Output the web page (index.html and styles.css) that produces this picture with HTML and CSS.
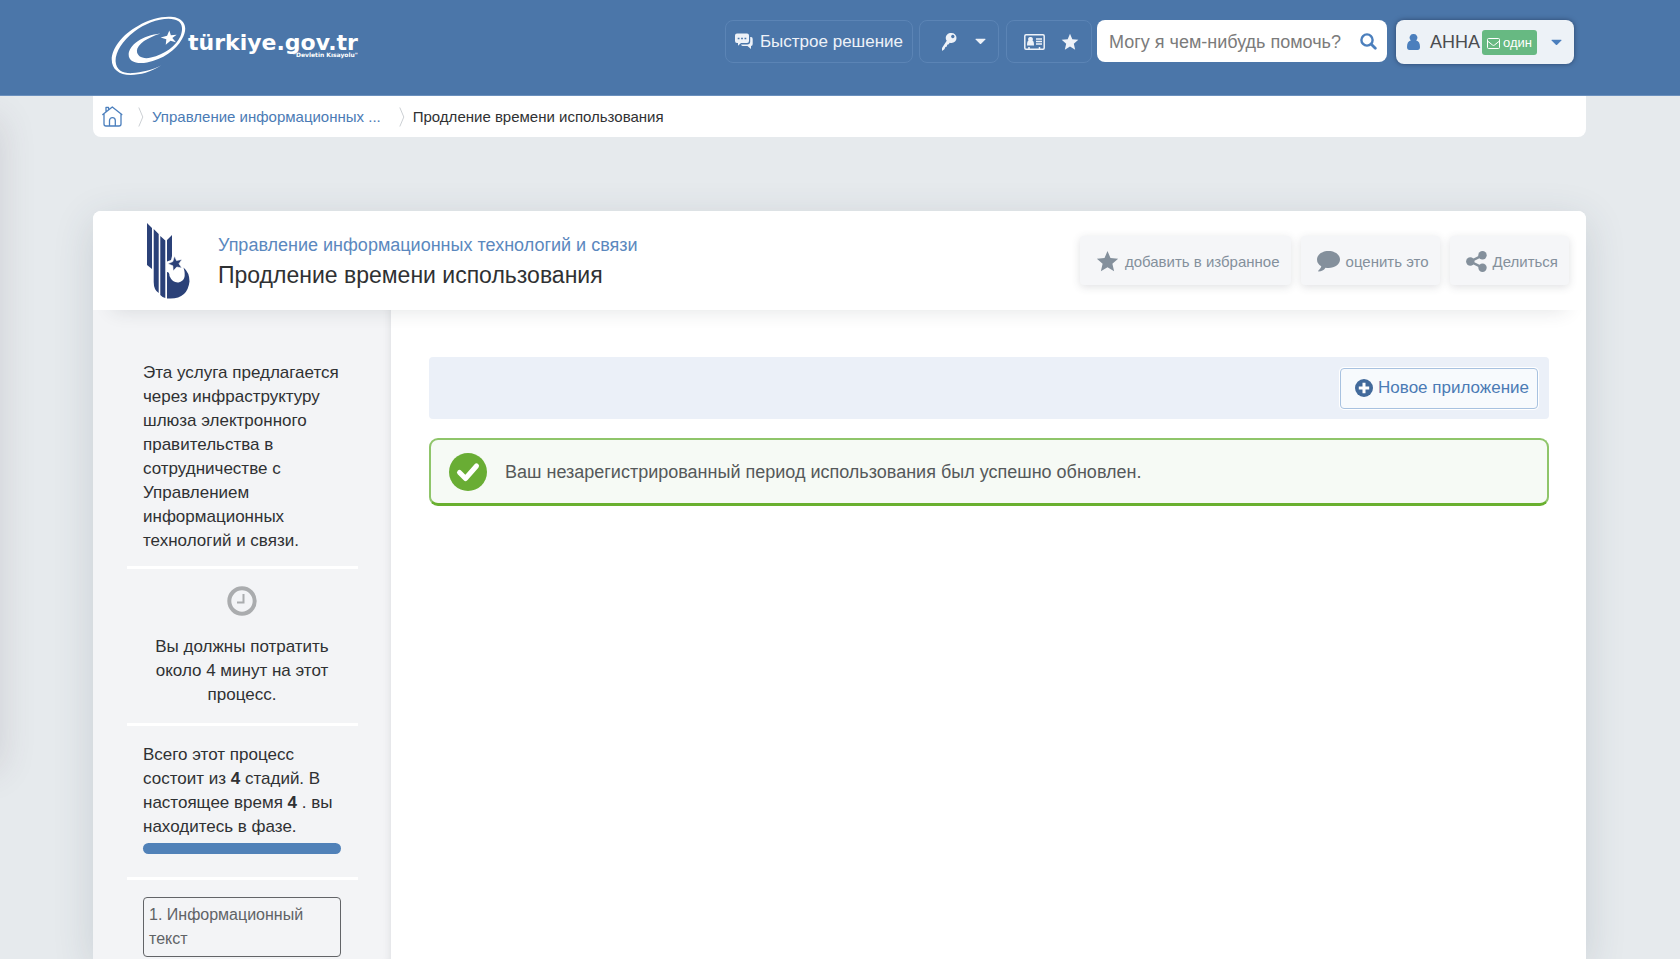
FILE: index.html
```
<!DOCTYPE html>
<html lang="ru">
<head>
<meta charset="utf-8">
<title>Продление времени использования</title>
<link rel="stylesheet" href="styles.css">
</head>
<body>
<svg class="defs" aria-hidden="true">
  <symbol id="star" viewBox="0 0 24 24"><path d="M12 1l3.1 7.4 8 .7-6 5.3 1.8 7.8-6.9-4.1-6.9 4.1 1.8-7.8-6-5.3 8-.7z"/></symbol>
  <symbol id="caret" viewBox="0 0 12 7"><path d="M1 .5h10q.8 0 .3.7L6.7 6q-.7.7-1.4 0L.7 1.200Q.200.5 1 .5z"/></symbol>
</svg>
<header class="topbar">
  <a class="logo" href="#" aria-label="türkiye.gov.tr">
    <svg width="78" height="60" viewBox="0 0 78 62">
      <path fill="#fff" fill-rule="evenodd" d="M52 51C41 58 30 61 20 61C8 61 .5 55 .5 45C.5 34 11 19 28 10C42 2 58-1 68 2C77 5 79 14 73 24C67 35 53 45 37 48C26 50 18 47 18 40C18 30 32 20 51 18C38 22 26.500 29 26.500 36C26.500 42 33 45 41 43C55 40 67 31 71.500 21C75 12 73 5 65 3.500C53 1 36 7 24 16C11 26 4 38 4.500 47C5 56 12 59.500 22 59C31 58.500 42 56 52 51z"/>
      <path fill="#fff" d="M60 15l1.600 4.800 6-.3-4.500 3.300 3.700 4.400-5.600-1.500-4.900 4 .6-5.600-5.900-2 6.700-1.600z"/>
    </svg>
    <span class="wordmark"><span class="brand">türkiye.gov.tr</span><span class="motto">"Devletin Kısayolu"</span></span>
  </a>
  <nav class="tools">
    <button class="ghost quick" type="button">
      <svg width="18" height="17" viewBox="0 0 18 17" fill="currentColor"><path fill-rule="evenodd" d="M2 .5h10q2 0 2 2V8q0 2-2 2H6l-3 2.700V10H2Q0 10 0 8V2.500Q0 .5 2 .5zM2.700 4.800v1.400h1.800V4.800zm3.400 0v1.400h1.800V4.800zm3.400 0v1.400h1.800V4.800z"/><path d="M15.200 4H16q1.700 0 1.700 2v5q0 2-1.700 2v3l-3.500-3H8q-1.500 0-2-1.600h6.200q3 0 3-3z"/></svg>
      <span>Быстрое решение</span>
    </button>
    <button class="ghost key" type="button" aria-label="Вход">
      <svg width="15" height="18" viewBox="0 0 15 18" fill="currentColor"><path fill-rule="evenodd" d="M9.500 0a5 5 0 0 1 0 10q-1 0-1.800-.3l-1 1.600-1.500.5-.3 1.700-1.500.5-1 2.300-2 1.500-.4-.3V15l4.700-7.200A5 5 0 0 1 9.500 0zM10.800 1.800a1.700 1.700 0 1 0 .01 0z"/></svg>
      <svg class="caret" width="11" height="7"><use href="#caret"/></svg>
    </button>
    <div class="ghost pair">
      <button type="button" aria-label="Профиль"><svg width="21" height="16" viewBox="0 0 21 16"><path fill="none" stroke="currentColor" stroke-width="1.500" d="M2 .8h17q1.200 0 1.200 1.200v12q0 1.200-1.200 1.200H2Q.8 15.200.8 14V2Q.8.8 2 .8zM12 5h6M12 7.500h6M12 10h6M5 13v2M15.500 13v2"/><path fill="currentColor" d="M6.500 3a2.200 2.200 0 0 1 2 3.500Q10 7 10 11.500H3Q3 7 4.500 6.500A2.200 2.200 0 0 1 6.500 3z"/></svg></button>
      <button type="button" aria-label="Избранное"><svg width="18" height="18"><use href="#star"/></svg></button>
    </div>
    <form class="search">
      <input type="text" aria-label="Поиск" placeholder="Могу я чем-нибудь помочь?">
      <button type="button" aria-label="Искать"><svg width="17" height="17" viewBox="0 0 17 17" fill="none" stroke="#4b7fbd" stroke-width="2.400"><circle cx="7" cy="7" r="5.600"/><path stroke-width="2.800" stroke-linecap="round" d="M11.500 11.500l3.800 3.800"/></svg></button>
    </form>
    <button class="user" type="button">
      <svg width="13" height="16" viewBox="0 0 13 16" fill="#4b7fbd"><path d="M6.500 0a3.700 3.700 0 0 1 2.700 6.400Q13 7 13 13q0 3-2.500 3h-8Q0 16 0 13q0-6 3.800-6.600A3.700 3.700 0 0 1 6.500 0z"/></svg>
      <span class="name">АННА</span>
      <span class="badge"><svg width="13" height="11" viewBox="0 0 13 11" fill="none" stroke="#fff"><path d="M.5 1.500q0-1 1-1h10q1 0 1 1v8q0 1-1 1h-10q-1 0-1-1zM.5 3l5 4q1 .8 2 0l5-4"/></svg>один</span>
      <svg width="11" height="7" fill="#4b7fbd"><use href="#caret"/></svg>
    </button>
  </nav>
</header>
<div class="page">
  <nav class="crumbs" aria-label="Навигация">
    <a href="#" aria-label="Главная"><svg class="home" width="21" height="21" viewBox="0 0 21 21" fill="none" stroke="#4b7fbd" stroke-width="1.300" stroke-linejoin="round" stroke-linecap="round"><path d="M.8 8.500L10.300 1l9.500 7.500M2 7.800V18q0 2 2 2h13q2 0 2-2V7.800M4 5.800V1.300h2.500v2.200M7.500 20v-5.500a2.800 2.800 0 0 1 5.800 0V20"/></svg></a>
    <svg class="sep" width="6" height="20" viewBox="0 0 6 20" fill="none" stroke="#ccd0d4"><path d="M.8.5l4 9.500-4 9.500"/></svg>
    <a href="#">Управление информационных ...</a>
    <svg class="sep" width="6" height="20" viewBox="0 0 6 20" fill="none" stroke="#ccd0d4"><path d="M.8.5l4 9.500-4 9.500"/></svg>
    <span>Продление времени использования</span>
  </nav>
  <main class="card">
    <div class="card-head">
      <svg class="emblem" width="44" height="76" viewBox="0 0 44 76" fill="#2b4178">
        <path d="M0 0l5 5v41l-5-4zM6.700 6l5 5v59q-5-3-5-11zM13.300 13l5 4.500V75q-3-.5-5-3zM20 17l5-5v21l-1 4-4 1.500z"/>
        <path d="M20 49q2.500 0 2.500 4 3 7 9 6.500 9-2 5-15 6 5 6 14-2 17-19 17H20z"/>
        <path stroke="#fff" stroke-width=".6" d="M27.500 33l2 4.600 5.500-1.200-3 4.300 2.800 4.300-5-1-3.600 4-.4-5.200-5-2 5-2.200z"/>
      </svg>
      <div class="titles">
        <a href="#">Управление информационных технологий и связи</a>
        <h1>Продление времени использования</h1>
      </div>
      <div class="actions">
        <button type="button"><svg width="23" height="23"><use href="#star"/></svg>добавить в избранное</button>
        <button type="button"><svg width="23" height="21" viewBox="0 0 23 21"><path d="M11.500 0C18 0 23 3.700 23 8.500S18 17 11.500 17q-1.500 0-3-.3Q6 20.500 1.500 20.500q-.8-.5 0-1Q4 17.500 4.300 15.200 0 12.800 0 8.500C0 3.700 5 0 11.500 0z"/></svg>оценить это</button>
        <button type="button"><svg width="21" height="21" viewBox="0 0 21 21"><circle cx="4.300" cy="10.500" r="4.200"/><circle cx="16.500" cy="4.300" r="4.200"/><circle cx="16.500" cy="16.700" r="4.200"/><path fill="none" stroke="currentColor" stroke-width="2.500" d="M16.500 4.300L4.300 10.500l12.200 6.200"/></svg>Делиться</button>
      </div>
    </div>
    <div class="card-body">
      <aside class="side">
        <section><p>Эта услуга предлагается через инфраструктуру шлюза электронного правительства в сотрудничестве с Управлением информационных технологий и связи.</p></section>
        <section class="time">
          <svg width="30" height="30" viewBox="0 0 30 30" fill="none" stroke="#aaacae"><circle cx="15" cy="15" r="12.700" stroke-width="4"/><path stroke-width="2" d="M16.500 8v8.500H10"/></svg>
          <p>Вы должны потратить около 4 минут на этот процесс.</p>
        </section>
        <section class="stage">
          <p>Всего этот процесс состоит из <b>4</b> стадий. В настоящее время <b>4</b> . вы находитесь в фазе.</p>
          <div class="progress"></div>
        </section>
        <section class="steps"><a class="step" href="#">1. Информационный текст</a></section>
      </aside>
      <div class="content">
        <div class="toolbar"><button type="button"><svg width="18" height="18" viewBox="0 0 18 18"><circle cx="9" cy="9" r="9" fill="#426a9b"/><path stroke="#fff" stroke-width="3" d="M9 3.800v10.400M3.800 9h10.400"/></svg>Новое приложение</button></div>
        <div class="alert" role="status"><svg width="38" height="38" viewBox="0 0 38 38"><circle cx="19" cy="19" r="19" fill="#69ad34"/><path fill="none" stroke="#fff" stroke-width="5" stroke-linecap="round" stroke-linejoin="round" d="M10.500 19.500l6 6L27.500 13"/></svg>Ваш незарегистрированный период использования был успешно обновлен.</div>
      </div>
    </div>
  </main>
</div>
</body>
</html>
```
FILE: styles.css
```
* { box-sizing: border-box; }
body {
  display: flex;
  flex-direction: column;
  margin: 0;
  min-height: 100vh;
  background: #e6eaed;
  color: #2f3133;
  font: 16px/24px "Liberation Sans", Arial, sans-serif;
  overflow-x: hidden;
}
a { color: #4b7bb5; text-decoration: none; }
button { margin: 0; padding: 0; border: 0; background: none; font: inherit; color: inherit; cursor: pointer; }
p, h1 { margin: 0; font-weight: 400; }
svg { flex: none; }
.defs { position: absolute; width: 0; height: 0; }

body::before {
  content: "";
  position: absolute;
  top: 120px;
  bottom: 190px;
  left: -40px;
  width: 40px;
  box-shadow: 0 0 36px rgba(80, 60, 80, .16);
}

.topbar {
  position: relative;
  display: flex;
  justify-content: space-between;
  align-items: flex-start;
  height: 96px;
  padding: 16px 106px 0 110px;
  background: #4b76a9;
  border-bottom: 1px solid #6b90bd;
}
.logo { display: flex; color: #fff; }
.wordmark { display: flex; flex-direction: column; padding-top: 16px; font-family: "DejaVu Sans", sans-serif; font-weight: 700; }
.brand { font-size: 22px; line-height: 22px; }
.motto { align-self: flex-end; font-size: 6px; line-height: 6px; margin-top: -2px; }
.tools { display: flex; padding-top: 4px; color: #eef2f8; fill: currentColor; }
.ghost { display: flex; align-items: center; justify-content: center; height: 43px; border: 1px solid #5b84b5; border-radius: 8px; }
.quick { width: 188px; gap: 7px; font-size: 17px; margin-right: 6px; }
.key { width: 80px; gap: 18px; padding-left: 10px; margin-right: 7px; }
.pair { width: 86px; gap: 16px; padding-left: 5px; margin-right: 5px; }
.pair button { display: flex; }
.search { display: flex; align-items: center; width: 290px; height: 42px; padding: 0 10px 0 12px; margin-right: 9px; background: #fff; border-radius: 8px; }
.search input { flex: 1; min-width: 0; padding: 2px 0 0; border: 0; outline: 0; background: none; font: inherit; font-size: 18px; }
.search input::placeholder { color: #7b7b7b; opacity: 1; }
.search button { display: flex; }
.user { display: flex; align-items: center; width: 178px; height: 44px; padding: 0 12px 0 11px; background: #edf2f7; border-radius: 8px; box-shadow: 0 0 5px #2c466b; color: #4b4d50; }
.name { margin-left: 10px; font-size: 18px; }
.badge { display: flex; align-items: center; gap: 3px; height: 25px; margin: 0 auto 0 2px; padding: 2px 5px 0; background: #67b982; border-radius: 3px; color: #fff; font-size: 13px; }

.page { position: relative; flex: 1; display: flex; flex-direction: column; padding: 0 94px 0 93px; }
.crumbs { display: flex; align-items: center; height: 41px; padding: 0 9px; background: #fff; border-radius: 0 0 8px 8px; font-size: 15px; }
.crumbs .home { display: block; }
.crumbs .sep { margin: 0 8px 0 15px; }
.crumbs .sep + a { margin-right: 3px; }

.card { flex: 1; display: flex; flex-direction: column; margin-top: 74px; background: #fff; border-radius: 8px 8px 0 0; box-shadow: 0 10px 40px rgba(50, 70, 85, .16); }
.card-head { position: relative; display: flex; align-items: center; height: 99px; padding: 0 17px 0 54px; background: #fff; border-radius: 8px 8px 0 0; box-shadow: 0 20px 20px -20px rgba(40, 50, 60, .14); }
.titles { display: flex; flex-direction: column; margin-left: 27px; }
.titles a { color: #5b88be; font-size: 18px; line-height: 28px; }
.titles h1 { font-size: 23px; line-height: 32px; }
.actions { display: flex; gap: 10px; margin-left: auto; font-size: 15px; }
.actions button { display: flex; align-items: center; gap: 6px; height: 49px; padding: 2px 11px 0 16px; background: #f5f6f8; border-radius: 4px; box-shadow: 0 2px 8px rgba(60, 70, 80, .16); color: #84909c; fill: currentColor; }
.card-body { flex: 1; display: flex; }
.side { width: 298px; flex: none; padding: 51px 33px 0 34px; background: #f3f4f6; box-shadow: inset -8px 0 8px -8px rgba(40, 50, 60, .12); font-size: 17px; }
.side section { padding: 17px 17px 16px 16px; border-top: 3px solid #fff; }
.side section:first-child { padding-top: 0; padding-bottom: 13px; border: 0; }
.time { text-align: center; }
.time svg { display: block; margin: 0 auto 19px; }
.progress { height: 11px; margin: 4px 0 7px; background: #5081b8; border-radius: 6px; }
.side .steps { padding-bottom: 0; }
.step { display: block; padding: 5px; border: 1px solid #626467; border-radius: 4px; color: #606366; font-size: 16px; }
.content { flex: 1; padding: 47px 37px 0 38px; }
.toolbar { display: flex; justify-content: flex-end; align-items: center; height: 62px; padding: 0 11px; background: #ebf0f8; border-radius: 4px; }
.toolbar button { display: flex; align-items: center; gap: 5px; height: 41px; padding: 0 8px 0 14px; background: #f7fafd; border: 1px solid #a8c2e0; border-radius: 4px; box-shadow: 0 0 0 1px #fff; color: #4b7bb5; font-size: 17px; }
.alert { display: flex; align-items: center; gap: 18px; height: 68px; margin-top: 19px; padding: 0 18px; background: #f6faf5; border: 2px solid #8fc56a; border-bottom: 3px solid #69b02f; border-radius: 9px; color: #55595a; font-size: 18px; }
```
